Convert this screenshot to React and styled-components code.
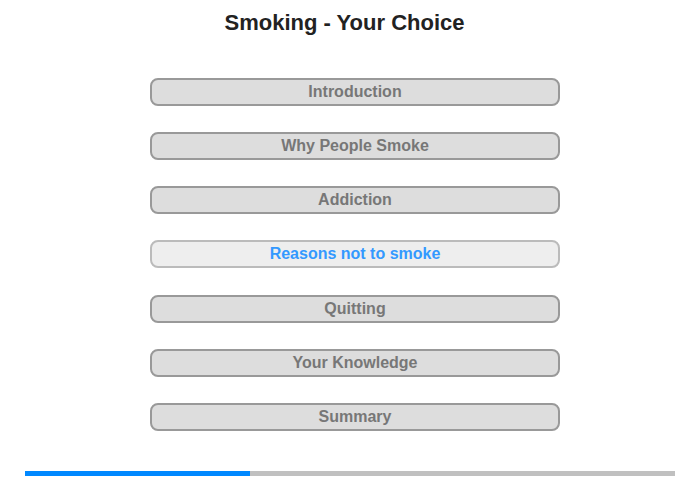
import React from 'react';
import styled, { createGlobalStyle } from 'styled-components';

const GlobalStyle = createGlobalStyle`
  html, body {
    margin: 0;
    padding: 0;
    background: #ffffff;
  }
  body {
    font-family: "Liberation Sans", Arial, sans-serif;
  }
`;

const Page = styled.div`
  width: 700px;
  height: 480px;
  display: flex;
  flex-direction: column;
  align-items: center;
`;

const Title = styled.h1`
  margin: 10px 11px 0 0;
  font-size: 22px;
  line-height: 26px;
  font-weight: bold;
  color: #222222;
`;

const Menu = styled.nav`
  margin: 42px 0 0 10px;
  display: flex;
  flex-direction: column;
  gap: 26.15px;
`;

const MenuButton = styled.button`
  box-sizing: border-box;
  width: 410px;
  height: 28px;
  padding: 0;
  border: 2px solid ${p => (p.$active ? '#bbbbbb' : '#999999')};
  border-radius: 8px;
  background: ${p => (p.$active ? '#eeeeee' : '#dddddd')};
  color: ${p => (p.$active ? '#3399ff' : '#777777')};
  font-family: "Liberation Sans", Arial, sans-serif;
  font-size: 16px;
  font-weight: bold;
  line-height: 24px;
  text-align: center;
  cursor: pointer;
`;

const Progress = styled.div`
  margin-top: 40px;
  width: 650px;
  height: 5px;
  background: #c0c0c0;
  display: flex;
`;

const ProgressFill = styled.div`
  height: 100%;
  background: #0088ff;
`;

const items = [
  'Introduction',
  'Why People Smoke',
  'Addiction',
  'Reasons not to smoke',
  'Quitting',
  'Your Knowledge',
  'Summary',
];

export default function App() {
  const current = 3;
  return (
    <>
      <GlobalStyle />
      <Page>
        <Title>Smoking - Your Choice</Title>
        <Menu>
          {items.map((label, i) => (
            <MenuButton key={label} $active={i === current}>
              {label}
            </MenuButton>
          ))}
        </Menu>
        <Progress>
          <ProgressFill style={{ width: 225 }} />
        </Progress>
      </Page>
    </>
  );
}
